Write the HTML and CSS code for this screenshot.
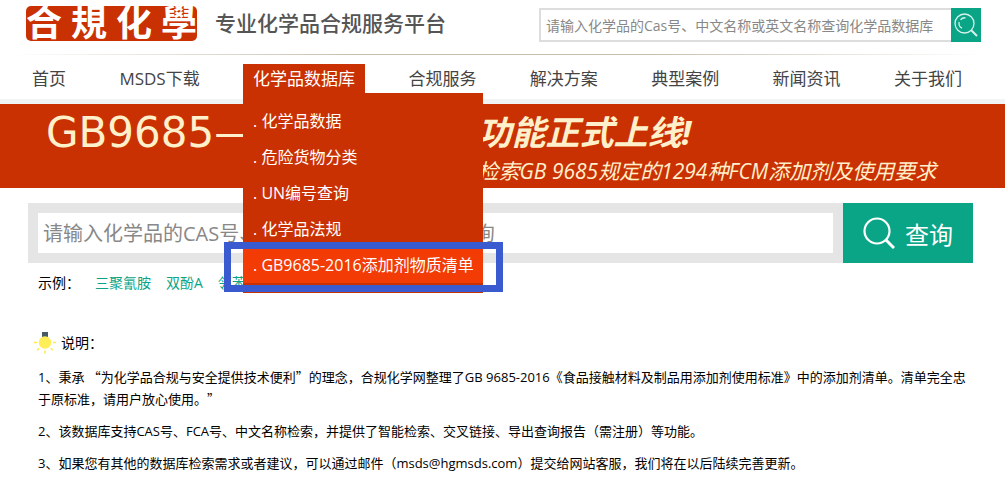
FILE: index.html
```
<!DOCTYPE html>
<html lang="zh-CN">
<head>
    <meta charset="UTF-8">
    <meta name="viewport" content="width=device-width, initial-scale=1.0">
    <title>合规化学</title>
    <link rel="stylesheet" href="styles.css">
</head>
<body>
    <header class="header">
        <a href="#" class="logo"><span>合</span><span>規</span><span>化</span><span>學</span></a>
        <p class="slogan">专业化学品合规服务平台</p>
        <form class="top-search">
            <input type="text" class="top-input" aria-label="查询化学品数据库" placeholder="请输入化学品的Cas号、中文名称或英文名称查询化学品数据库">
            <button type="submit" class="top-btn" aria-label="查询">
                <svg width="24" height="24" viewBox="0 0 24 24" fill="none" stroke="#d5f3ec">
                    <circle cx="10.500" cy="10.500" r="9.500" stroke-width="1.300"/>
                    <path d="M8 15.200A5.500 5.500 0 0 1 5.200 9M6.500 6.800A5.500 5.500 0 0 1 11.500 4.800" stroke-width="1.300"/>
                    <path d="M17.300 17.300L23 23" stroke-width="2"/>
                </svg>
            </button>
        </form>
    </header>

    <nav class="nav">
        <ul class="nav-list">
            <li><a href="#" class="nav-link">首页</a></li>
            <li><a href="#" class="nav-link">MSDS下载</a></li>
            <li class="has-menu">
                <a href="#" class="nav-link active">化学品数据库</a>
                <ul class="menu">
                    <li><a href="#" class="menu-link">. 化学品数据</a></li>
                    <li><a href="#" class="menu-link">. 危险货物分类</a></li>
                    <li><a href="#" class="menu-link">. UN编号查询</a></li>
                    <li><a href="#" class="menu-link">. 化学品法规</a></li>
                    <li><a href="#" class="menu-link current">. GB9685-2016添加剂物质清单</a></li>
                </ul>
            </li>
            <li><a href="#" class="nav-link">合规服务</a></li>
            <li><a href="#" class="nav-link">解决方案</a></li>
            <li><a href="#" class="nav-link">典型案例</a></li>
            <li><a href="#" class="nav-link">新闻资讯</a></li>
            <li><a href="#" class="nav-link">关于我们</a></li>
        </ul>
    </nav>

    <section class="banner">
        <div class="banner-code">GB9685—</div>
        <div class="banner-text">
            <h1>功能正式上线!</h1>
            <p>检索GB 9685规定的1294种FCM添加剂及使用要求</p>
        </div>
    </section>

    <main class="main">
        <form class="search">
            <input type="text" class="search-input" aria-label="请输入化学品的CAS号" placeholder="请输入化学品的CAS号、FCA号、中文名称进行查询">
            <button type="submit" class="search-btn">
                <svg width="32" height="32" viewBox="0 0 32 32" fill="none" stroke="#fff">
                    <circle cx="14" cy="14" r="12.500" stroke-width="2.200"/>
                    <path d="M22.500 22.500L31 31" stroke-width="3"/>
                </svg>
                查询
            </button>
        </form>

        <div class="examples">
            <span class="examples-label">示例：</span>
            <a href="#">三聚氰胺</a>
            <a href="#">双酚A</a>
            <a href="#">邻苯二甲酸酯</a>
        </div>

        <section class="notes">
            <h2>
                <svg width="22" height="22" viewBox="0 0 22 22">
                    <rect x="8" y="0" width="6" height="5" fill="#455a64"/>
                    <circle cx="11" cy="10.500" r="6.200" fill="#ffee58"/>
                    <path d="M0 10.500h3M19 10.500h3M11 18.500v3M3.200 18.200l2-2M18.800 18.200l-2-2" stroke="#ffe94d" stroke-width="1.600"/>
                </svg>
                说明：
            </h2>
            <p>1、秉承 <span class="quote">“</span>为化学品合规与安全提供技术便利<span class="quote">”</span>的理念，合规化学网整理了GB 9685-2016《食品接触材料及制品用添加剂使用标准》中的添加剂清单。清单完全忠于原标准，请用户放心使用。<span class="quote">”</span></p>
            <p>2、该数据库支持CAS号、FCA号、中文名称检索，并提供了智能检索、交叉链接、导出查询报告（需注册）等功能。</p>
            <p>3、如果您有其他的数据库检索需求或者建议，可以通过邮件（msds@hgmsds.com）提交给网站客服，我们将在以后陆续完善更新。</p>
        </section>
    </main>
</body>
</html>
```
FILE: styles.css
```
:root {
    --red: #ca3102;
    --red-light: #f23b05;
    --green: #0aa486;
    --cream: #fff0cc;
    --blue: #3a5bd0;
}

* {
    box-sizing: border-box;
    margin: 0;
    padding: 0;
}

body {
    font-family: "Open Sans", "Noto Sans CJK SC", sans-serif;
    font-size: 14px;
    color: #000;
    background-color: #fff;
    text-spacing-trim: space-all;
}

ul {
    list-style: none;
}

a {
    text-decoration: none;
}

input, button {
    font-family: inherit;
    border: none;
    border-radius: 0;
    outline: none;
}

button {
    cursor: pointer;
    color: #fff;
    background-color: var(--green);
}

/* header */
.header {
    display: flex;
    align-items: flex-start;
    height: 54px;
    padding: 6px 24px 0 26px;
}

.logo {
    display: flex;
    justify-content: space-between;
    width: 171px;
    height: 35px;
    border-radius: 5px;
    background-color: var(--red);
    color: #fff;
    font-size: 36px;
    font-weight: 700;
    line-height: 34px;
}

.slogan {
    margin-left: 18px;
    color: #555;
    font-size: 21px;
    font-weight: 500;
    line-height: 34px;
    white-space: nowrap;
}

.top-search {
    display: flex;
    width: 442px;
    height: 34px;
    margin: 2px 0 0 auto;
}

.top-input {
    flex: 1;
    min-width: 0;
    padding: 0 5px;
    border: 2px solid #ddd;
    border-right: none;
    font-size: 14px;
}

.top-input::placeholder,
.search-input::placeholder {
    color: #888;
}

.top-btn {
    display: flex;
    align-items: center;
    justify-content: center;
    width: 30px;
}

/* navigation */
.nav {
    padding: 10px 33px 6px 22px;
    border-bottom: 5px solid #f0f4f5;
    background: linear-gradient(to right, #fff 1%, #cabfae 35%, #cabfae 65%, #fff 98%) top / 100% 1px no-repeat;
}

.nav-list {
    display: flex;
    justify-content: space-between;
}

.nav-link {
    display: block;
    padding: 0 10px;
    color: #444;
    font-size: 17px;
    line-height: 29px;
}

.nav-link.active {
    color: #fff;
    background-color: var(--red);
}

.has-menu {
    position: relative;
}

.menu {
    position: absolute;
    z-index: 10;
    top: 100%;
    left: 0;
    width: 240px;
    padding: 10px 0;
    background-color: var(--red);
}

.menu-link {
    display: block;
    padding: 0 10px;
    color: #fff;
    font-size: 16px;
    line-height: 36px;
    white-space: nowrap;
}

.menu-link.current {
    position: relative;
    background-color: var(--red-light);
}

/* frame round the current entry */
.menu-link.current::after {
    content: "";
    position: absolute;
    top: -5px;
    right: -20px;
    bottom: -9px;
    left: -19px;
    border: 7px solid var(--blue);
}

/* banner */
.banner {
    display: grid;
    grid-template-columns: 45% 1fr;
    height: 84px;
    padding-left: 46px;
    overflow: hidden;
    background-color: var(--red);
    color: var(--cream);
    white-space: nowrap;
}

.banner-code {
    font-family: "DejaVu Sans", sans-serif;
    font-size: 42px;
    line-height: 58px;
}

.banner-text {
    font-style: italic;
}

.banner-text h1 {
    font-size: 34px;
    font-weight: 700;
    line-height: 56px;
}

.banner-text p {
    font-size: 21px;
    line-height: 22px;
}

/* search */
.main {
    padding: 15px 32px 0 28px;
}

.search {
    display: flex;
    height: 60px;
}

.search-input {
    flex: 1;
    min-width: 0;
    padding: 0 5px;
    border: 10px solid #e5e5e5;
    font-size: 20px;
}

.search-btn {
    display: flex;
    align-items: center;
    justify-content: center;
    gap: 10px;
    width: 130px;
    font-size: 24px;
}

.examples {
    display: flex;
    gap: 15px;
    padding: 10px 10px 0;
    line-height: 20px;
}

.examples a {
    color: var(--green);
}

/* notes */
.notes {
    padding: 37px 0 0 10px;
}

.notes h2 {
    display: flex;
    align-items: center;
    gap: 5px;
    margin-left: -4px;
    font-size: 14px;
    font-weight: 400;
    line-height: 26px;
}

.notes p {
    margin-top: 10px;
    font-size: 13px;
    line-height: 22px;
}

/* full-width quotation marks */
.quote {
    font-family: "Noto Sans CJK SC", sans-serif;
}
```
